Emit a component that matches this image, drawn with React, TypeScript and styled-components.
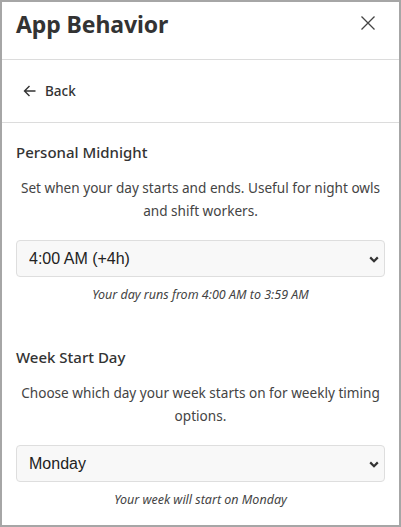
import React, { useState } from "react";
import styled, { createGlobalStyle } from "styled-components";

const GlobalStyle = createGlobalStyle`
  html, body {
    margin: 0;
    padding: 0;
    background: #fff;
  }
  * {
    box-sizing: border-box;
  }
`;

const midnightOptions = [
  { value: "0", label: "12:00 AM (default)" },
  { value: "2", label: "2:00 AM (+2h)" },
  { value: "4", label: "4:00 AM (+4h)" },
  { value: "6", label: "6:00 AM (+6h)" },
];

const days = ["Sunday", "Monday", "Saturday"];

function App() {
  const [midnight, setMidnight] = useState("4");
  const [weekStart, setWeekStart] = useState("Monday");

  return (
    <>
      <GlobalStyle />
      <Panel>
        <Header>
          <Title>App Behavior</Title>
          <CloseButton aria-label="Close">
            <svg width="16" height="16" viewBox="0 0 16 16">
              <path
                d="M1.5 1.5 L14.5 14.5 M14.5 1.5 L1.5 14.5"
                stroke="#444"
                strokeWidth="1.3"
                fill="none"
              />
            </svg>
          </CloseButton>
        </Header>

        <BackRow>
          <BackButton>
            <svg width="14" height="14" viewBox="0 0 14 14">
              <path
                d="M12.5 7 H1.5 M6.5 2 L1.5 7 L6.5 12"
                stroke="#333"
                strokeWidth="1.4"
                fill="none"
              />
            </svg>
            Back
          </BackButton>
        </BackRow>

        <Section>
          <Heading>Personal Midnight</Heading>
          <Description>
            Set when your day starts and ends. Useful for night owls and shift
            workers.
          </Description>
          <SelectWrap>
            <Select value={midnight} onChange={(e) => setMidnight(e.target.value)}>
              {midnightOptions.map((o) => (
                <option key={o.value} value={o.value}>
                  {o.label}
                </option>
              ))}
            </Select>
            <Chevron />
          </SelectWrap>
          <Note>Your day runs from 4:00 AM to 3:59 AM</Note>
        </Section>

        <Section $gap>
          <Heading>Week Start Day</Heading>
          <Description>
            Choose which day your week starts on for weekly timing options.
          </Description>
          <SelectWrap>
            <Select value={weekStart} onChange={(e) => setWeekStart(e.target.value)}>
              {days.map((d) => (
                <option key={d} value={d}>
                  {d}
                </option>
              ))}
            </Select>
            <Chevron />
          </SelectWrap>
          <Note>Your week will start on {weekStart}</Note>
        </Section>
      </Panel>
    </>
  );
}

const Chevron = () => (
  <ChevronIcon width="10" height="7" viewBox="0 0 10 7">
    <path d="M1.2 1.4 L5 5.2 L8.8 1.4" stroke="#333" strokeWidth="2.2" fill="none" />
  </ChevronIcon>
);

const Panel = styled.div`
  width: 401px;
  height: 527px;
  border: 2px solid #a6a6a6;
  overflow: hidden;
  font-family: "Noto Sans", "Open Sans", sans-serif;
  color: #333;
  display: flex;
  flex-direction: column;
`;

const Header = styled.div`
  height: 58px;
  display: flex;
  align-items: flex-start;
  justify-content: space-between;
  padding: 6px 22px 0 14px;
  border-bottom: 1px solid #dcdcdc;
`;

const Title = styled.h1`
  margin: 0;
  font-size: 23px;
  font-weight: 700;
  line-height: 32px;
  color: #333;
  letter-spacing: -0.1px;
`;

const CloseButton = styled.button`
  margin-top: 6px;
  width: 18px;
  height: 18px;
  padding: 0;
  border: none;
  background: none;
  display: flex;
  align-items: center;
  justify-content: center;
`;

const BackRow = styled.div`
  height: 63px;
  display: flex;
  align-items: center;
  padding: 0 21px;
  border-bottom: 1px solid #dcdcdc;
`;

const BackButton = styled.button`
  display: flex;
  align-items: center;
  gap: 8px;
  padding: 0;
  border: none;
  background: none;
  font-family: "Noto Sans", "Open Sans", sans-serif;
  font-size: 13.5px;
  font-weight: 500;
  color: #333;
`;

const Section = styled.div<{ $gap?: boolean }>`
  padding: ${({ $gap }) => ($gap ? "42px" : "18px")} 14px 0;
  display: flex;
  flex-direction: column;
`;

const Heading = styled.h2`
  margin: 0 0 13px;
  font-size: 15px;
  font-weight: 500;
  line-height: 22px;
  color: #333;
`;

const Description = styled.p`
  margin: 0 0 18px;
  font-size: 13.6px;
  line-height: 23px;
  text-align: center;
  color: #444;
`;

const SelectWrap = styled.div`
  position: relative;
`;

const Select = styled.select`
  width: 100%;
  height: 37px;
  appearance: none;
  -webkit-appearance: none;
  padding: 0 30px 0 12px;
  border: 1px solid #dedede;
  border-radius: 4px;
  background: #f8f8f8;
  font-family: "Liberation Sans", Arial, sans-serif;
  font-size: 16px;
  color: #222;
  outline: none;
`;

const ChevronIcon = styled.svg`
  position: absolute;
  right: 6px;
  top: 50%;
  margin-top: -3px;
  pointer-events: none;
`;

const Note = styled.p`
  margin: 9px 0 0;
  font-size: 12.5px;
  line-height: 18px;
  font-style: italic;
  text-align: center;
  color: #444;
`;

export default App;
